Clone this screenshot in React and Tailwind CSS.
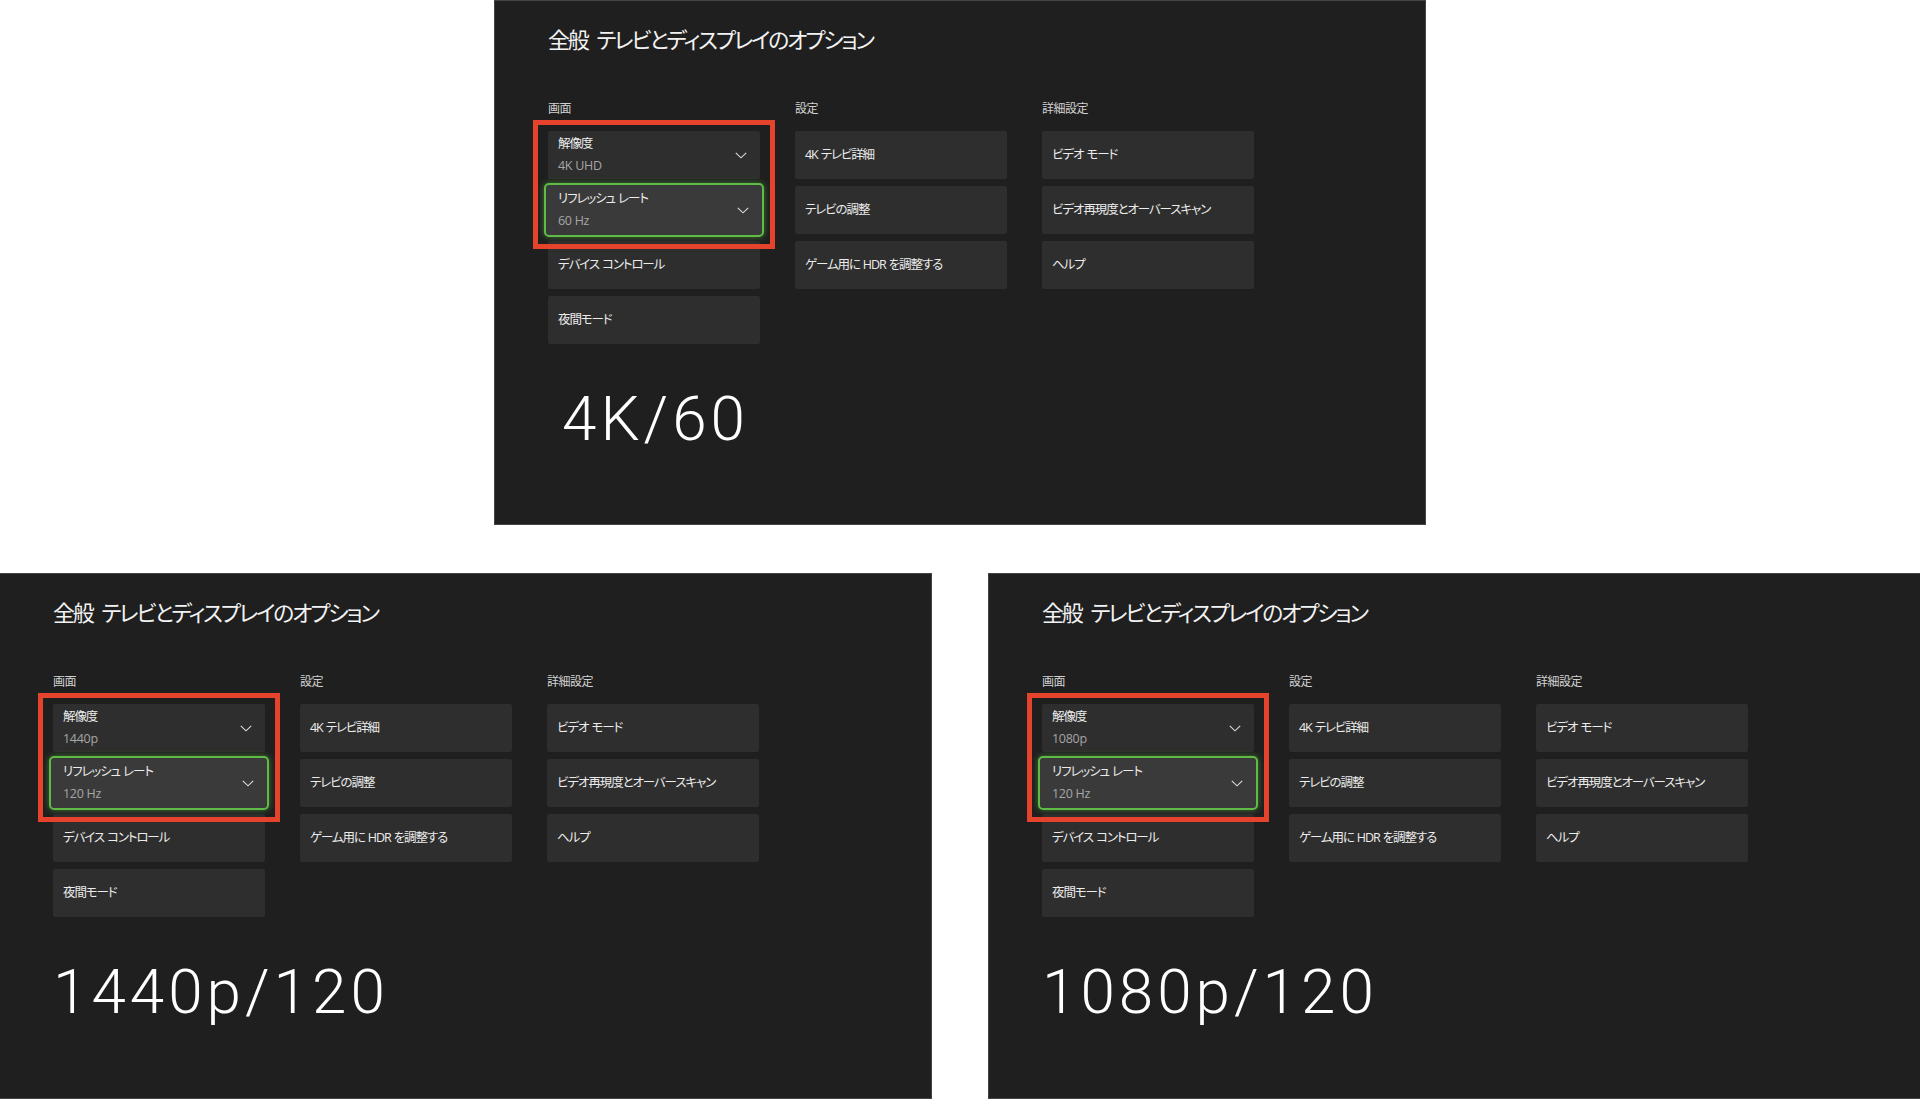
import React from "react";

const Chevron = () => (
  <svg width="12" height="7" viewBox="0 0 12 7" className="shrink-0">
    <polyline points="0.8,0.8 6,5.8 11.2,0.8" fill="none" stroke="#dcdcdc" strokeWidth="1.1" />
  </svg>
);

const Tile = ({ children }) => (
  <div className="h-[48px] w-[212px] rounded-[2px] bg-[#2e2e2e] px-[10px] flex items-center text-[12.5px] tracking-[-1.1px] text-[#ececec]">
    {children}
  </div>
);

const DropTile = ({ title, value, active }) =>
  active ? (
    <div className="-mx-[4px] -my-[3px] h-[54px] w-[220px] rounded-[5px] border-2 border-[#5dbb46] bg-[#3a3a3a] shadow-[0_0_6px_rgba(95,190,70,0.55)] pl-[12px] pr-[13px] flex items-center justify-between">
      <div className="flex flex-col tracking-[-1.1px]">
        <span className="text-[12.5px] leading-[22px] text-[#ececec]">{title}</span>
        <span className="text-[12.5px] leading-[22px] text-[#a6a6a6] tracking-[-0.3px]">{value}</span>
      </div>
      <Chevron />
    </div>
  ) : (
    <div className="h-[48px] w-[212px] rounded-[2px] bg-[#2e2e2e] pl-[10px] pr-[13px] flex items-center justify-between">
      <div className="flex flex-col tracking-[-1.1px]">
        <span className="text-[12.5px] leading-[22px] text-[#ececec]">{title}</span>
        <span className="text-[12.5px] leading-[22px] text-[#a6a6a6] tracking-[-0.3px]">{value}</span>
      </div>
      <Chevron />
    </div>
  );

const Label = ({ children }) => (
  <div className="h-[16px] text-[12px] leading-[16px] tracking-[-0.5px] text-[#d2d2d2] mb-[14px]">{children}</div>
);

const Panel = ({ res, rate, big, top, className }) => (
  <div
    className={
      "h-full w-[932px] bg-[#1f1f1f] border border-[#444] font-['Open_Sans','Noto_Sans_CJK_JP',sans-serif] [font-feature-settings:'palt'] " +
      className
    }
  >
    <div className="pl-[53px] pt-[23px]">
      <div className="text-[22px] leading-[28px] tracking-[-2.2px] text-[#f2f2f2] font-['Noto_Sans_CJK_JP',sans-serif] [font-feature-settings:'palt']">
        全般{"\u2002"}テレビとディスプレイのオプション
      </div>
      <div className="mt-[49px] flex gap-[35px]">
        <div className="relative w-[212px]">
          <Label>画面</Label>
          <div className="flex flex-col gap-[7px]">
            <DropTile title="解像度" value={res} />
            <DropTile title={"リフレッシュ\u2004レート"} value={rate} active />
            <Tile>{"デバイス\u2004コントロール"}</Tile>
            <Tile>夜間モード</Tile>
          </div>
          <div className="absolute left-[-15px] top-[19px] h-[129px] w-[242px] border-[5px] border-[#e5432b] pointer-events-none" />
        </div>
        <div className="w-[212px]">
          <Label>設定</Label>
          <div className="flex flex-col gap-[7px]">
            <Tile>{"4K\u2004テレビ詳細"}</Tile>
            <Tile>テレビの調整</Tile>
            <Tile>{"ゲーム用に\u2004HDR\u2004を調整する"}</Tile>
          </div>
        </div>
        <div className="w-[212px]">
          <Label>詳細設定</Label>
          <div className="flex flex-col gap-[7px]">
            <Tile>{"ビデオ\u2004モード"}</Tile>
            <Tile>ビデオ再現度とオーバースキャン</Tile>
            <Tile>ヘルプ</Tile>
          </div>
        </div>
      </div>
      <div
        className={
          "mt-[44px] text-[62px] leading-[62px] font-light tracking-[4px] text-white font-['Roboto','Liberation_Sans',sans-serif] " +
          (top ? "ml-[14px]" : "ml-[0px]")
        }
      >
        {big}
      </div>
    </div>
  </div>
);

export default function App() {
  return (
    <div className="w-[1920px] h-[1099px] bg-white flex flex-col overflow-hidden">
      <div className="h-[525px] flex justify-center">
        <Panel res="4K UHD" rate="60 Hz" big="4K/60" top className="" />
      </div>
      <div className="mt-[48px] h-[526px] flex justify-between">
        <Panel res="1440p" rate="120 Hz" big="1440p/120" className="border-l-0" />
        <Panel res="1080p" rate="120 Hz" big="1080p/120" className="border-r-0" />
      </div>
    </div>
  );
}
